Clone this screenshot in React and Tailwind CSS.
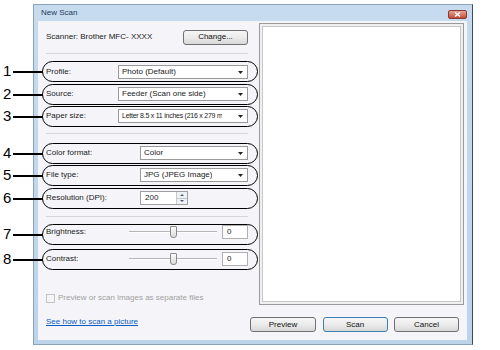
import React from 'react';

const Dropdown = ({ w, text }) => (
    <div className={`${w} h-[14px] bg-white border border-[#9a9a9a] flex items-center justify-between pl-[3px] pr-[4px]`}>
        <span className="overflow-hidden whitespace-nowrap">{text}</span>
        <svg width="5" height="3" viewBox="0 0 5 3" className="shrink-0 ml-[3px]">
            <path d="M0 0h5L2.5 3z" fill="#222" />
        </svg>
    </div>
);

const Button = ({ w, children, primary }) => (
    <div className={`${w} h-[15px] rounded-[3px] border ${primary ? 'border-[#3c7fb1]' : 'border-[#707070]'} bg-gradient-to-b from-[#f6f6f6] via-[#ebebeb] to-[#d8d8d8] flex items-center justify-center text-[#111]`}>
        {children}
    </div>
);

const Slider = () => (
    <div className="relative w-[88px] h-[14px] flex items-center">
        <div className="w-full h-[2px] border-t border-[#b5b5b5] border-b border-b-white" />
        <div className="absolute left-[41px] top-[1px] w-[7px] h-[12px] rounded-b-[3px] rounded-t-[1px] border border-[#8a8a8a] bg-gradient-to-b from-[#fafafa] to-[#dcdcdc]" />
    </div>
);

const Field = ({ label, children, className = '' }) => (
    <div className={`h-[14px] flex items-center ${className}`}>
        <span className="shrink-0">{label}</span>
        <div className="flex-1" />
        {children}
    </div>
);

const Sep = ({ className }) => <div className={`h-px bg-[#d6d6dc] ${className}`} />;

const Callout = ({ n, top }) => (
    <>
        <div className="absolute left-[3px] text-[15px] leading-none text-black" style={{ top: top - 8 }}>{n}</div>
        <div className="absolute left-[13px] w-[30px] h-[1.5px] bg-black" style={{ top: top }} />
        <div className="absolute left-[42px] w-[216px] h-[21px] rounded-full border-[1.5px] border-black" style={{ top: top - 10 }} />
    </>
);

const App = () => {
    return (
        <div className="relative w-[500px] h-[350px] bg-white overflow-hidden text-[8px] text-[#1a1a1a]" style={{ fontFamily: '"Liberation Sans", Arial, sans-serif' }}>
            {/* window */}
            <div className="ml-[33px] mt-[4px] w-[440px] h-[341px] flex flex-col border border-[#8ba3bf] border-r-[#3a4a5c] bg-gradient-to-b from-[#c7dbef] to-[#bcd3ea]">
                <div className="h-[16px] shrink-0 flex items-center justify-between pl-[7px] pr-[5px]">
                    <span className="text-[#1e395b] text-[8px]">New Scan</span>
                    <div className="w-[19px] h-[9px] mt-[3px] rounded-[2px] border border-[#8a3a33] bg-gradient-to-b from-[#e8a393] to-[#c54a36] flex items-center justify-center">
                        <svg width="7" height="5" viewBox="0 0 7 5">
                            <path d="M1 0.5l5 4M6 0.5l-5 4" stroke="#fff" strokeWidth="1.4" />
                        </svg>
                    </div>
                </div>
                <div className="flex-1 ml-[4px] mr-[5px] mb-[4px] bg-[#f5f5f9] flex pl-[8px] pr-[3px]">
                    {/* left column */}
                    <div className="w-[202px] flex flex-col">
                        <div className="mt-[9px] h-[14px] flex items-center justify-between">
                            <span>Scanner: Brother MFC- XXXX</span>
                            <Button w="w-[65px]">Change...</Button>
                        </div>
                        <Sep className="mt-[9px]" />
                        <Field label="Profile:" className="mt-[11px]"><Dropdown w="w-[130px]" text="Photo (Default)" /></Field>
                        <Field label="Source:" className="mt-[8px]"><Dropdown w="w-[130px]" text="Feeder (Scan one side)" /></Field>
                        <Field label="Paper size:" className="mt-[8px]"><Dropdown w="w-[130px]" text={<span className="text-[7px] tracking-[-0.25px]">Letter 8.5 x 11 inches (216 x 279 m</span>} /></Field>
                        <Sep className="mt-[10px]" />
                        <Field label="Color format:" className="mt-[12px]"><Dropdown w="w-[108px]" text="Color" /></Field>
                        <Field label="File type:" className="mt-[8px]"><Dropdown w="w-[108px]" text="JPG (JPEG Image)" /></Field>
                        <div className="mt-[9px] h-[14px] flex items-center">
                            <span className="w-[94px]">Resolution (DPI):</span>
                            <div className="w-[48px] h-[14px] bg-white border border-[#a0a0a0] flex">
                                <span className="flex-1 pl-[4px] leading-[12px]">200</span>
                                <div className="w-[11px] flex flex-col border-l border-[#c8c8c8]">
                                    <div className="flex-1 flex items-center justify-center bg-[#eef2f7] border-b border-[#c8c8c8]">
                                        <svg width="4" height="2" viewBox="0 0 4 2"><path d="M0 2h4L2 0z" fill="#4a5a70" /></svg>
                                    </div>
                                    <div className="flex-1 flex items-center justify-center bg-[#eef2f7]">
                                        <svg width="4" height="2" viewBox="0 0 4 2"><path d="M0 0h4L2 2z" fill="#4a5a70" /></svg>
                                    </div>
                                </div>
                            </div>
                        </div>
                        <Sep className="mt-[11px]" />
                        <div className="mt-[8px] h-[14px] flex items-center">
                            <span className="w-[83px]">Brightness:</span>
                            <Slider />
                            <div className="ml-[5px] w-[26px] h-[14px] bg-white border border-[#b0b0b0] pl-[4px] leading-[12px]">0</div>
                        </div>
                        <div className="mt-[13px] h-[14px] flex items-center">
                            <span className="w-[83px]">Contrast:</span>
                            <Slider />
                            <div className="ml-[5px] w-[26px] h-[14px] bg-white border border-[#b0b0b0] pl-[4px] leading-[12px]">0</div>
                        </div>
                        <div className="mt-[27px] h-[10px] flex items-center text-[#a0a0a0]">
                            <div className="w-[9px] h-[9px] border border-[#c4c4c4] bg-[#f4f4f4] mr-[3px]" />
                            <span>Preview or scan images as separate files</span>
                        </div>
                        <div className="mt-[14px] h-[10px] flex items-center">
                            <span className="text-[#0a5bc4] underline">See how to scan a picture</span>
                        </div>
                    </div>
                    {/* right column */}
                    <div className="ml-[11px] flex-1 flex flex-col">
                        <div className="mt-[2px] h-[282px] border border-[#9a9a9a] p-[2px] bg-[#f0f0f0]">
                            <div className="w-full h-full bg-white border border-[#c8c8c8]" />
                        </div>
                        <div className="mt-[12px] flex justify-between -ml-[9px] mr-[5px]">
                            <Button w="w-[66px]">Preview</Button>
                            <Button w="w-[65px]" primary>Scan</Button>
                            <Button w="w-[65px]">Cancel</Button>
                        </div>
                    </div>
                </div>
            </div>
            {/* annotations */}
            <Callout n="1" top={71} />
            <Callout n="2" top={94} />
            <Callout n="3" top={116} />
            <Callout n="4" top={153} />
            <Callout n="5" top={175} />
            <Callout n="6" top={198} />
            <Callout n="7" top={234} />
            <Callout n="8" top={259} />
        </div>
    );
};

export default App;
